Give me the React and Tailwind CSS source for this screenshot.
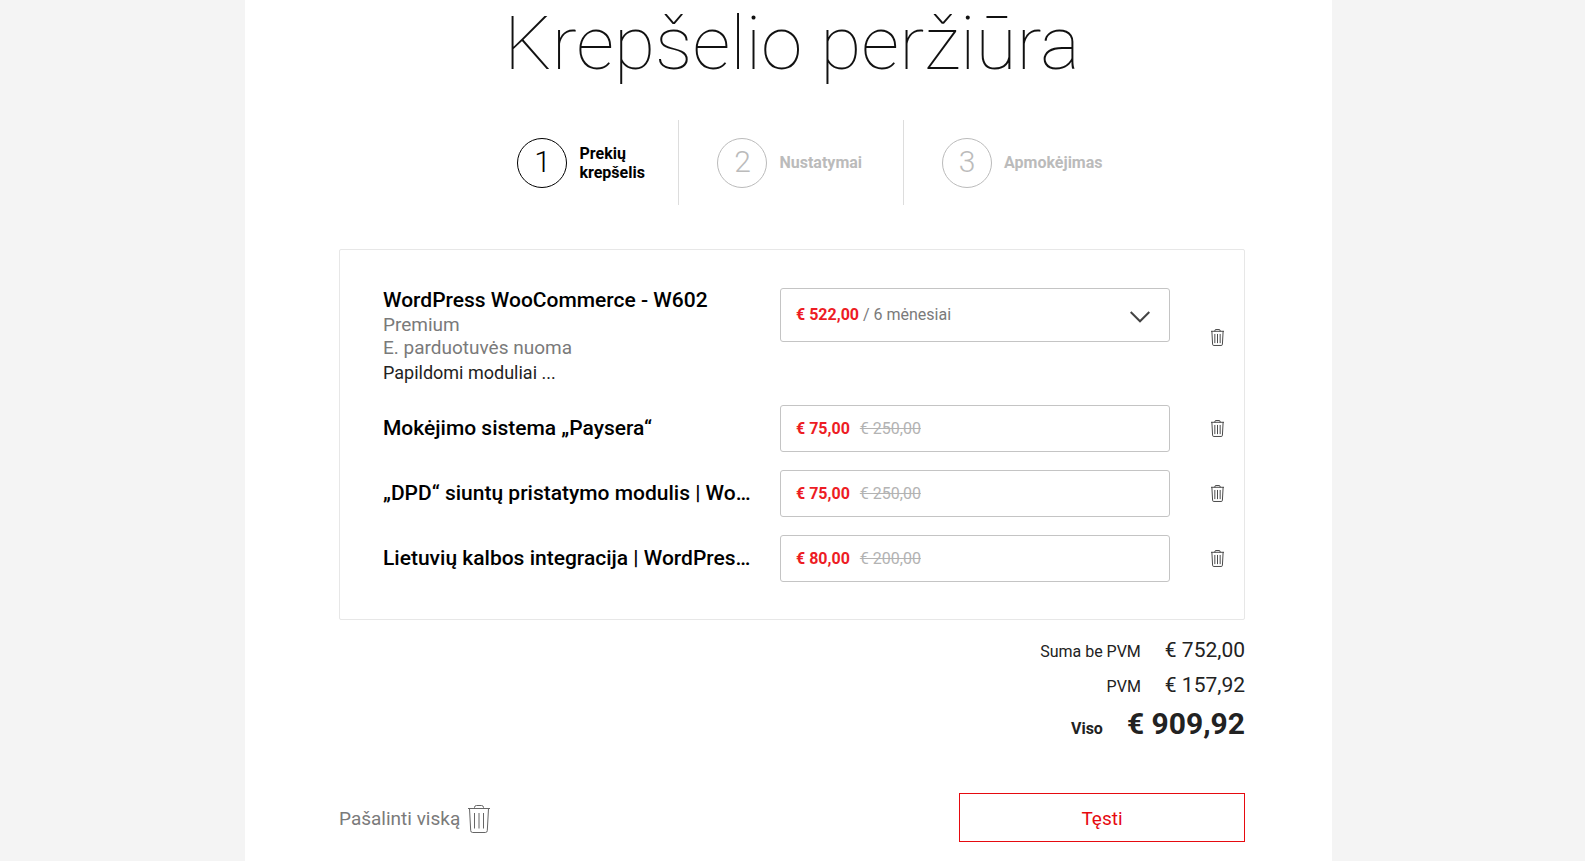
import React, { useState } from "react";

const steps = [
  { number: 1, label: "Prekių krepšelis", active: true, pad: "pl-[38px] pr-8" },
  { number: 2, label: "Nustatymai", active: false, pad: "pl-[38px] pr-[41px]" },
  { number: 3, label: "Apmokėjimas", active: false, pad: "pl-[38px]" }
];

const modules = [
  { name: "Mokėjimo sistema „Paysera“", price: "€ 75,00", oldPrice: "€ 250,00" },
  { name: "„DPD“ siuntų pristatymo modulis | Wo…", price: "€ 75,00", oldPrice: "€ 250,00" },
  { name: "Lietuvių kalbos integracija | WordPres…", price: "€ 80,00", oldPrice: "€ 200,00" }
];

const periods = [{ price: "€ 522,00", term: "6 mėnesiai" }];

function TrashIcon({ className, strokeWidth = 1 }) {
  return (
    <svg viewBox="0 0 22 28" fill="none" stroke="currentColor" strokeWidth={strokeWidth} className={className} aria-hidden="true">
      <path d="M0 3.5h22M6.5 3.5V2.5a2 2 0 0 1 2-2h5a2 2 0 0 1 2 2v1" />
      <path d="M1.5 3.5l1.2 22a2 2 0 0 0 2 2h12.6a2 2 0 0 0 2-2l1.2-22" />
      <path d="M6.5 8v15.5M11 8v15.5M15.5 8v15.5" />
    </svg>
  );
}

function RemoveButton({ name }) {
  return (
    <button type="button" aria-label={`Pašalinti ${name}`} className="ml-5 flex w-[54px] justify-center text-[#333]">
      <TrashIcon className="h-[17px] w-[13px]" strokeWidth={1.5} />
    </button>
  );
}

function Step({ step }) {
  return (
    <li className={`flex h-[85px] items-center gap-3 ${step.pad} ${step.active ? "text-black" : "text-[#bbb]"}`}>
      <span className="flex size-[50px] items-center justify-center rounded-full border border-current pb-0.5 text-[30px] leading-none font-light">
        {step.number}
      </span>
      <span className={`text-base leading-[19px] font-bold ${step.active ? "w-[67px]" : ""}`}>{step.label}</span>
    </li>
  );
}

export default function App() {
  const [period, setPeriod] = useState(0);

  return (
    <div className="min-h-screen bg-[#f4f4f4] pr-2 font-[Roboto,sans-serif] text-[#222]">
      <main className="mx-auto min-h-screen max-w-[1087px] bg-white pr-[87px] pb-4 pl-[94px]">
        <h1 className="text-center text-[75px] leading-[86px] font-thin text-[#111]">Krepšelio peržiūra</h1>

        <ol className="mt-[34px] flex justify-center divide-x divide-[#ddd] pr-0.5">
          {steps.map((step) => (
            <Step key={step.number} step={step} />
          ))}
        </ol>

        <section className="mt-11 flex flex-col gap-[18px] rounded-xs border border-[#e7e7e7] pt-[38px] pb-[37px] pl-[43px]">
          <div className="flex items-center">
            <div className="min-w-0 flex-1 pr-6">
              <h2 className="truncate text-[21px] leading-[25px] font-medium text-black">WordPress WooCommerce - W602</h2>
              <p className="text-[19px] leading-[23px] text-[#7a7a7a]">Premium</p>
              <p className="text-[19px] leading-[23px] text-[#7a7a7a]">E. parduotuvės nuoma</p>
              <button type="button" className="block text-lg leading-7">Papildomi moduliai ...</button>
            </div>
            <label className="relative flex h-[54px] w-[390px] items-center self-start rounded-[3px] border border-[#c4c4c4] pr-[19px] pl-[15px]">
              <span className="flex-1 text-base text-[#7a7a7a]">
                <b className="text-[#ed1c24]">{periods[period].price}</b> / {periods[period].term}
              </span>
              <svg viewBox="0 0 20 12" fill="none" stroke="#444" strokeWidth="2" className="mt-[3px] h-3 w-5" aria-hidden="true">
                <path d="M.7 1l9.3 9.3L19.3 1" />
              </svg>
              <select
                aria-label="Laikotarpis"
                value={period}
                onChange={(e) => setPeriod(Number(e.target.value))}
                className="absolute inset-0 cursor-pointer opacity-0"
              >
                {periods.map((p, i) => (
                  <option key={p.term} value={i}>{p.price} / {p.term}</option>
                ))}
              </select>
            </label>
            <RemoveButton name="WordPress WooCommerce - W602" />
          </div>

          {modules.map((item) => (
            <div key={item.name} className="flex items-center">
              <div className="min-w-0 flex-1 pr-6">
                <h2 className="truncate text-[21px] leading-[25px] font-medium text-black">{item.name}</h2>
              </div>
              <div className="flex h-[47px] w-[390px] items-center gap-[10px] rounded-[3px] border border-[#c4c4c4] px-[15px] text-base">
                <b className="text-[#ed1c24]">{item.price}</b>
                <s className="text-[#b3b3b3]">{item.oldPrice}</s>
              </div>
              <RemoveButton name={item.name} />
            </div>
          ))}
        </section>

        <dl className="mt-[13px] flex flex-col items-end">
          <div className="flex h-[35px] items-baseline gap-6">
            <dt className="text-base leading-[35px]">Suma be PVM</dt>
            <dd className="text-[21px] leading-[35px]">€ 752,00</dd>
          </div>
          <div className="flex h-[35px] items-baseline gap-6">
            <dt className="text-base leading-[35px]">PVM</dt>
            <dd className="text-[21px] leading-[35px]">€ 157,92</dd>
          </div>
          <div className="flex h-[42px] items-baseline gap-6 font-bold">
            <dt className="text-base">Viso</dt>
            <dd className="text-[30px] leading-[42px]">€ 909,92</dd>
          </div>
        </dl>

        <div className="mt-12 flex items-center justify-between">
          <button type="button" className="flex items-center gap-2 pt-0.5 text-[19px] leading-8 text-[#7a7a7a]">
            Pašalinti viską
            <TrashIcon className="h-7 w-[22px] text-[#666]" />
          </button>
          <button type="button" className="h-[49px] w-[286px] border border-[#e60a0f] pt-[3px] text-[19px] text-[#e60a0f]">
            Tęsti
          </button>
        </div>
      </main>
    </div>
  );
}
